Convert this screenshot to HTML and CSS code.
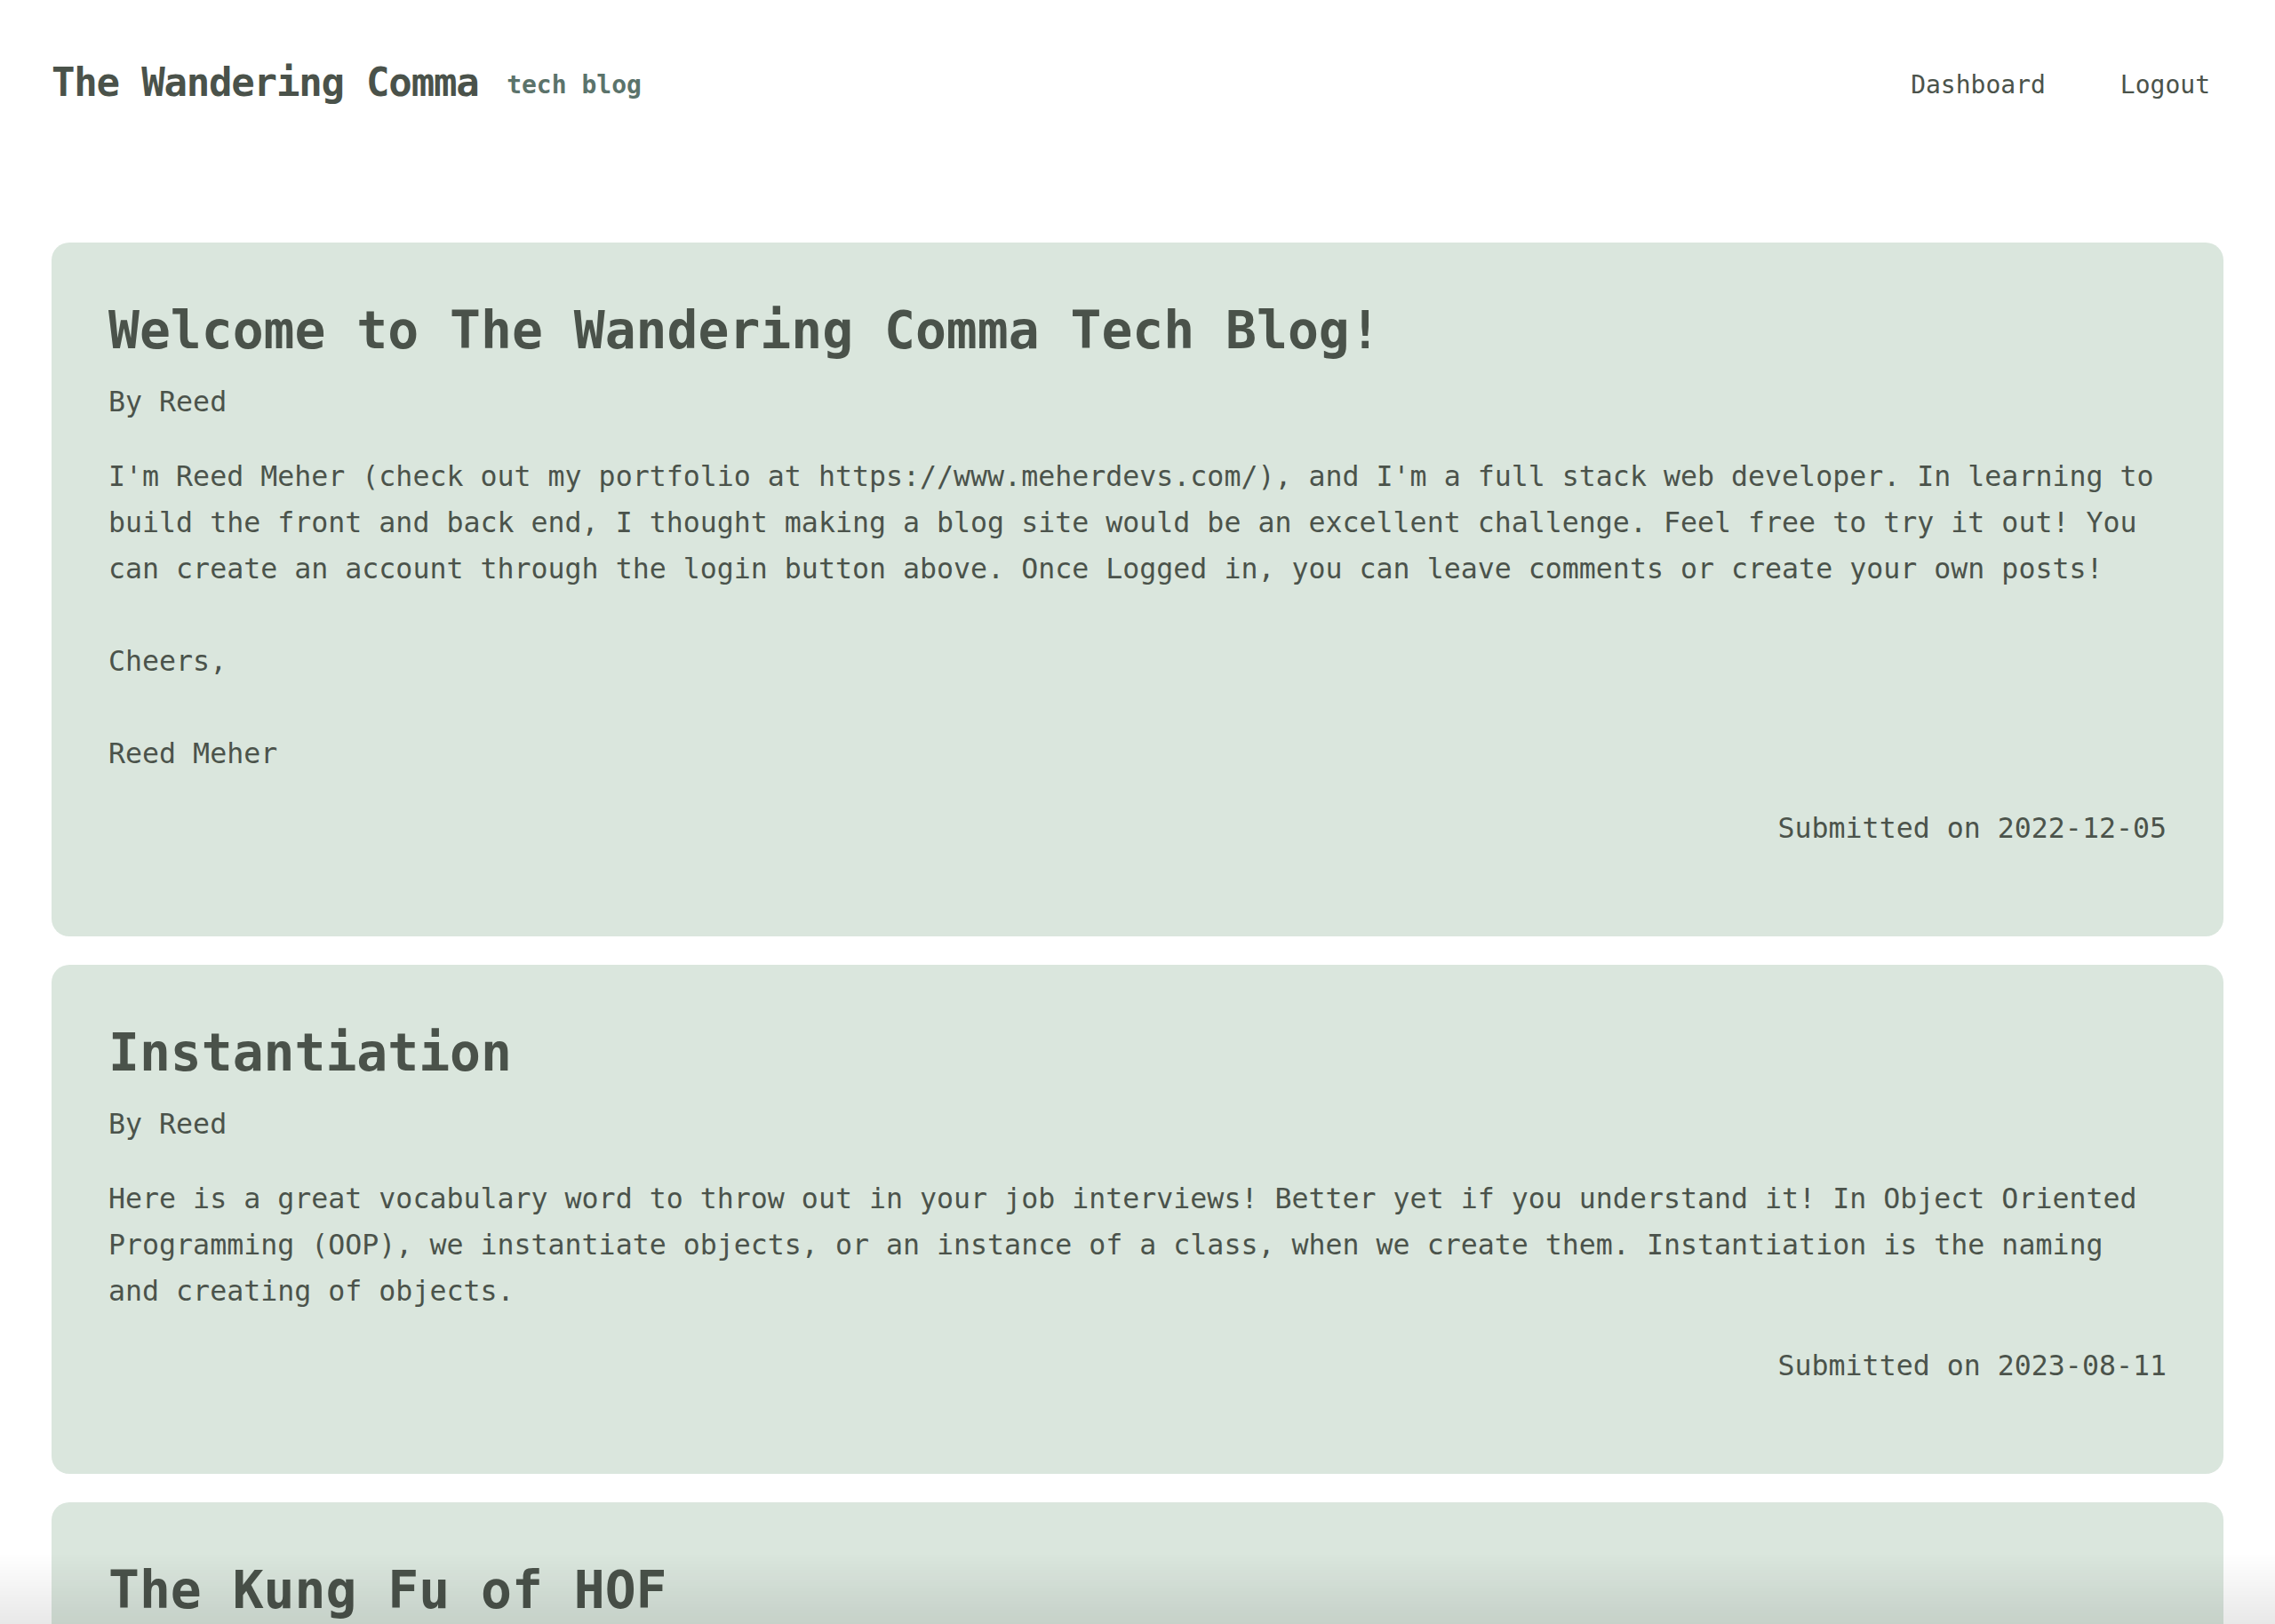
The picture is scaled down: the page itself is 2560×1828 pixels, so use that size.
FILE: index.html
```html
<!DOCTYPE html>
<html lang="en">
<head>
<meta charset="utf-8">
<title>The Wandering Comma</title>
<link rel="stylesheet" href="styles.css">
</head>
<body>
<header class="site-header">
  <div class="brand">
    <span class="brand-title">The Wandering Comma</span>
    <span class="brand-sub">tech blog</span>
  </div>
  <nav class="nav">
    <a class="nav-link" href="#">Dashboard</a>
    <a class="nav-link" href="#">Logout</a>
  </nav>
</header>
<main class="posts">
  <article class="post">
    <h2 class="post-title">Welcome to The Wandering Comma Tech Blog!</h2>
    <p class="post-meta">By Reed</p>
    <p class="post-body">I'm Reed Meher (check out my portfolio at https://www.meherdevs.com/), and I'm a full stack web developer. In learning to build the front and back end, I thought making a blog site would be an excellent challenge. Feel free to try it out! You can create an account through the login button above. Once Logged in, you can leave comments or create your own posts!<br><br>Cheers,<br><br>Reed Meher</p>
    <p class="post-date">Submitted on 2022-12-05</p>
  </article>
  <article class="post">
    <h2 class="post-title">Instantiation</h2>
    <p class="post-meta">By Reed</p>
    <p class="post-body">Here is a great vocabulary word to throw out in your job interviews! Better yet if you understand it! In Object Oriented Programming (OOP), we instantiate objects, or an instance of a class, when we create them. Instantiation is the naming and creating of objects.</p>
    <p class="post-date">Submitted on 2023-08-11</p>
  </article>
  <article class="post">
    <h2 class="post-title">The Kung Fu of HOF</h2>
    <p class="post-meta">By Reed</p>
    <p class="post-body">Higher Order Functions (HOF) are functions that take other functions as arguments, or return a function as their result.</p>
    <p class="post-date">Submitted on 2023-08-14</p>
  </article>
</main>
<div class="bottom-fade"></div>
</body>
</html>
```

FILE: styles.css
```css
html, body {
  margin: 0;
  padding: 0;
  background: #ffffff;
}

body {
  font-family: "DejaVu Sans Mono", "Liberation Mono", monospace;
  color: #4b534b;
}

.site-header {
  height: 186px;
  display: flex;
  align-items: center;
  justify-content: space-between;
  padding: 0 73px 0 58px;
}

.brand {
  white-space: nowrap;
  padding-bottom: 2px;
}

.brand-title {
  font-size: 44px;
  font-weight: bold;
  letter-spacing: -1.2px;
  color: #4a524a;
  margin-right: 22px;
}

.brand-sub {
  font-size: 28px;
  font-weight: bold;
  color: #5b736b;
  vertical-align: 3px;
}

.nav {
  display: flex;
  gap: 84px;
  padding-top: 4px;
}

.nav-link {
  font-size: 28px;
  color: #4b534b;
  text-decoration: none;
}

.posts {
  padding: 87px 58px 40px;
  display: flex;
  flex-direction: column;
  gap: 32px;
}

.post {
  background: #dae6dd;
  border-radius: 20px;
  padding: 64px;
}

.post-title {
  margin: 0 0 19px;
  font-size: 58px;
  line-height: 70px;
  font-weight: bold;
  letter-spacing: 0;
  color: #4a524a;
}

.post-meta,
.post-body,
.post-date {
  margin: 0 0 32px;
  font-size: 31.6px;
  line-height: 52px;
}

.post-date {
  text-align: right;
}

.bottom-fade {
  position: fixed;
  left: 0;
  right: 0;
  bottom: 0;
  height: 80px;
  pointer-events: none;
  background: linear-gradient(to bottom, rgba(0, 0, 0, 0), rgba(0, 0, 0, 0.09));
}
```
